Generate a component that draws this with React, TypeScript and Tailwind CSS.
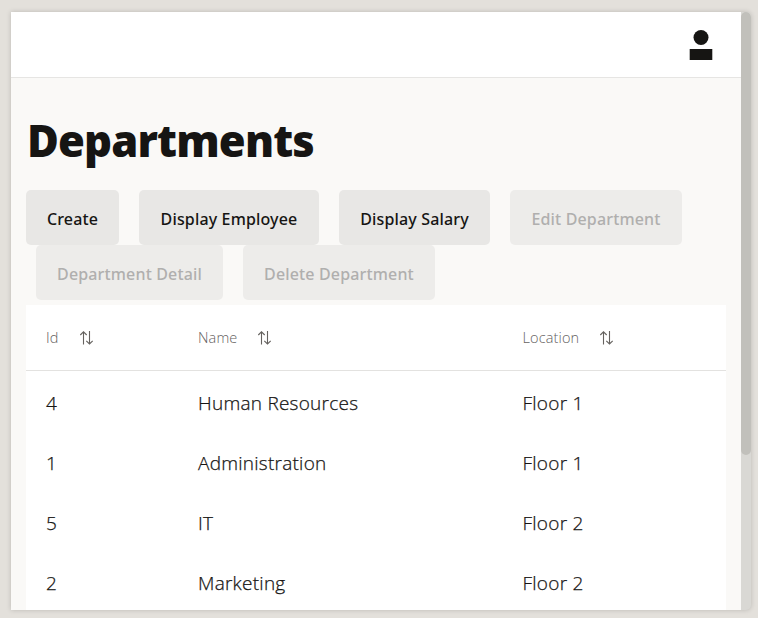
const columns = [
  { label: 'Id', width: 'w-[152px]' },
  { label: 'Name', width: 'w-[324.5px]' },
  { label: 'Location', width: 'w-[223px]' },
];

const rows = [
  ['4', 'Human Resources', 'Floor 1'],
  ['1', 'Administration', 'Floor 1'],
  ['5', 'IT', 'Floor 2'],
  ['2', 'Marketing', 'Floor 2'],
];

function ActionButton({ label, width, disabled }: { label: string; width: string; disabled?: boolean }) {
  return (
    <button
      disabled={disabled}
      className={`${width} h-[55px] shrink-0 rounded-[5px] pt-[3px] text-center font-['Noto_Sans',sans-serif] text-[16px] font-medium tracking-[0.15px] whitespace-nowrap ${
        disabled ? 'bg-[#edecea] text-[#b0afae]' : 'bg-[#e8e7e5] text-[#161513]'
      }`}
    >
      {label}
    </button>
  );
}

function SortIcon() {
  return (
    <svg width="15" height="14" viewBox="0 0 15 14" fill="none" stroke="#65625f" strokeWidth="1.1">
      <path d="M4.5 13.5V1M1.3 4 4.5 0.8l3.2 3.2M10.5 0V12.8M7.3 9.8l3.2 3.2 3.2-3.2" />
    </svg>
  );
}

export default function App() {
  return (
    <div className="h-[618px] w-[758px] overflow-hidden bg-[#e3e0db] pt-3 pl-[11px] font-['Open_Sans','Noto_Sans',sans-serif] text-[#161513]">
      <div className="flex h-[598px] w-[740px] overflow-hidden rounded-r-[5px] bg-[#d9d8d4] shadow-[0_0_5px_rgba(0,0,0,0.18)]">
        <main className="w-[730px] shrink-0 overflow-hidden bg-[#faf9f7]">
          <header className="flex h-[66px] justify-end border-b border-[#e6e5e3] bg-white pt-[18px] pr-7">
            <svg width="24" height="30" viewBox="0 0 24 30" fill="#161513">
              <circle cx="12" cy="7.5" r="7.5" />
              <path d="M.7 19h22.6v11H.7z" />
            </svg>
          </header>
          <div className="px-[15px]">
            <h1 className="flex h-28 items-center pt-[14px] pl-px font-['Noto_Sans',sans-serif] text-[43.5px] leading-none font-black tracking-[-0.85px]">Departments</h1>
            <div className="flex gap-5">
              <ActionButton label="Create" width="w-[93px]" />
              <ActionButton label="Display Employee" width="w-[180px]" />
              <ActionButton label="Display Salary" width="w-[151px]" />
              <ActionButton label="Edit Department" width="w-[172px]" disabled />
            </div>
            <div className="flex gap-5 pl-[10px]">
              <ActionButton label="Department Detail" width="w-[187px]" disabled />
              <ActionButton label="Delete Department" width="w-[192px]" disabled />
            </div>
            <section className="mt-[5px] bg-white">
              <div className="flex h-[66px] items-center border-b border-[#e3e2e0]">
                {columns.map((c) => (
                  <div key={c.label} className={`${c.width} flex shrink-0 items-center gap-5 pl-5 text-[14.5px] font-light tracking-[0.13px] text-[#65625f]`}>
                    <span>{c.label}</span>
                    <SortIcon />
                  </div>
                ))}
              </div>
              {rows.map((r) => (
                <div key={r[0]} className="flex h-[60px] items-center">
                  {r.map((cell, i) => (
                    <div key={i} className={`${columns[i].width} shrink-0 pt-[3px] pl-5 text-[19px] leading-7 font-light tracking-[0.25px] [-webkit-text-stroke:0.25px_#161513]`}>{cell}</div>
                  ))}
                </div>
              ))}
            </section>
          </div>
        </main>
        <div className="w-[10px] shrink-0">
          <div className="h-[443px] rounded-[5px] bg-[#c1c0bb]" />
        </div>
      </div>
    </div>
  );
}
